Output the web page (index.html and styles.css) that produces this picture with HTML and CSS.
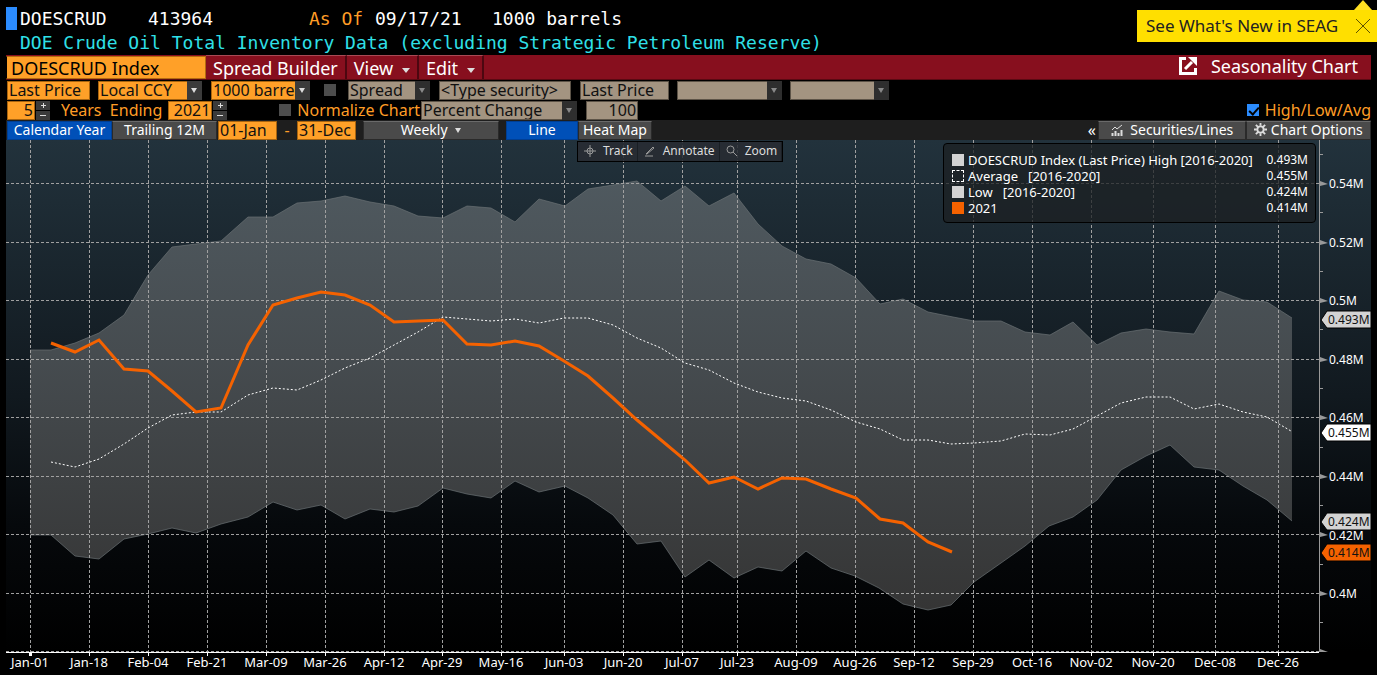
FILE: index.html
```html
<!DOCTYPE html>
<html lang="en">
<head>
  <meta charset="UTF-8">
  <meta name="viewport" content="width=device-width, initial-scale=1">
  <title>DOESCRUD Index | Seasonality Chart</title>
  <link rel="stylesheet" href="styles.css">
</head>
<body>

<header class="quote">
  <div class="quote-line">
    <span class="cursor"></span>
    <span class="ticker">DOESCRUD</span>
    <span class="last">413964</span>
    <span class="asof">As Of</span>
    <span class="date">09/17/21</span>
    <span>1000 barrels</span>
  </div>
  <h1>DOE Crude Oil Total Inventory Data (excluding Strategic Petroleum Reserve)</h1>
  <div class="news">
    <a href="#">See What's New in SEAG</a>
    <button class="close" aria-label="Close">
      <svg width="16" height="16" viewBox="0 0 16 16"><path d="M1 1l14 14M15 1L1 15"/></svg>
    </button>
  </div>
</header>

<nav class="menu">
  <input class="security" type="text" value="DOESCRUD Index" aria-label="Security">
  <button>Spread Builder</button>
  <button>View <i class="tri"></i></button>
  <button>Edit <i class="tri"></i></button>
  <span class="page-name">
    <svg width="18" height="18" viewBox="0 0 18 18"><path d="M7 1.500H1.500v15h15V11" /><path d="M6 12l7-7"/><path class="head" d="M9 0h9v9z"/></svg>
    Seasonality Chart
  </span>
</nav>

<div class="row">
  <input class="field w-price" type="text" value="Last Price" aria-label="Price field">
  <span class="pick w-ccy"><select aria-label="Currency"><option>Local CCY</option></select></span>
  <span class="pick w-unit"><select aria-label="Unit"><option>1000 barrels</option></select></span>
  <input class="tick" type="checkbox" aria-label="Spread on">
  <span class="pick off w-spread"><select aria-label="Spread type"><option>Spread</option></select></span>
  <input class="field off w-type" type="text" value="&lt;Type security&gt;" aria-label="Second security">
  <input class="field off w-price2" type="text" value="Last Price" aria-label="Second price field">
  <span class="pick off w-blank"><select aria-label="Second currency"><option></option></select></span>
  <span class="pick off w-blank2"><select aria-label="Second unit"><option></option></select></span>
</div>

<div class="row">
  <span class="stepper">
    <input class="field w-years" id="years" type="text" value="5">
    <span class="steps"><button class="plus" aria-label="More years"></button><button aria-label="Fewer years"></button></span>
  </span>
  <label class="lbl ending" for="years">Years&nbsp; Ending</label>
  <span class="stepper">
    <input class="field w-end" type="text" value="2021" aria-label="Ending year">
    <span class="steps"><button class="plus" aria-label="Next year"></button><button aria-label="Previous year"></button></span>
  </span>
  <input class="tick normal" id="normalize" type="checkbox">
  <label class="lbl" for="normalize">Normalize Chart</label>
  <span class="pick off w-change"><select aria-label="Normalize by"><option>Percent Change</option></select></span>
  <input class="field off w-base" type="text" value="100" aria-label="Base value">
  <span class="hla">
    <input class="tick" id="hla" type="checkbox" checked>
    <label class="lbl" for="hla">High/Low/Avg</label>
  </span>
</div>

<div class="row tabs">
  <button class="tab on w-tab">Calendar Year</button>
  <button class="tab w-tab">Trailing 12M</button>
  <input class="field w-day" type="text" value="01-Jan" aria-label="From">
  <span class="lbl dash">-</span>
  <input class="field w-day" type="text" value="31-Dec" aria-label="To">
  <button class="tab w-week">Weekly <i class="tri"></i></button>
  <button class="tab on w-line">Line</button>
  <button class="tab w-heat">Heat Map</button>
  <span class="right">
    <button class="more" aria-label="Collapse">«</button>
    <button class="tab w-sec">
      <svg width="12" height="12" viewBox="0 0 12 12"><path class="stroke" d="M1 6l3-3 2 2 5-4"/><path class="bars" d="M1.500 12V9M4.500 12V7M7.500 12V9M10.500 12V6"/></svg>
      Securities/Lines
    </button>
    <button class="tab w-opt">
      <svg width="13" height="13" viewBox="0 0 14 14"><circle class="ring" cx="7" cy="7" r="3.400"/><path class="teeth" d="M7 0v3M7 11v3M0 7h3M11 7h3M2 2l2.200 2.200M9.800 9.800L12 12M12 2L9.800 4.200M4.200 9.800L2 12"/></svg>
      Chart Options
    </button>
  </span>
</div>

<main class="chart">
  <svg class="plot" viewBox="6 140 1365 535" role="img" aria-label="Seasonality chart">
    <defs>
      <linearGradient id="bg" x1="0" y1="0" x2="0" y2="1">
        <stop offset="0" stop-color="#22323c"/>
        <stop offset="0.5" stop-color="#11191f"/>
        <stop offset="0.75" stop-color="#06090c"/>
        <stop offset="1" stop-color="#000"/>
      </linearGradient>
      <linearGradient id="band" gradientUnits="userSpaceOnUse" x1="0" y1="180" x2="0" y2="610">
        <stop offset="0" stop-color="#4f595f"/>
        <stop offset="0.4" stop-color="#464c50"/>
        <stop offset="1" stop-color="#353535"/>
      </linearGradient>
    </defs>
    <rect x="6" y="140" width="1365" height="512" fill="url(#bg)"/>

    <!-- high / low band -->
    <path class="band" d="M30 350 51 350 75 343 99 333 124 315 148 275 172 247 196 244 221 241 248 217 273 217 297 203 321 201 345 196 370 202 394 206 418 216 443 218 467 206 491 208 515 222 539 199 565 206 588 189 613 185 637 181 661 201 685 186 709 206 734 193 758 224 782 246 806 259 831 264 856 278 880 304 903 299 928 312 953 317 974 321 1001 321 1025 332 1050 335 1073 322 1097 345 1121 333 1146 329 1170 332 1194 334 1219 291 1243 300 1267 302 1292 318V521L1267 500 1243 486 1219 470 1194 467 1170 445 1146 456 1121 470 1097 500 1073 517 1049 526 1025 546 1001 563 974 582 951 605 928 610 903 604 879 588 855 576 831 568 806 551 782 571 758 567 734 578 709 560 685 577 661 541 637 544 613 515 588 498 565 486 539 492 515 481 491 498 467 494 443 488 418 506 394 512 370 509 345 519 321 505 297 510 273 502 248 517 221 524 196 533 172 528 148 534 124 539 99 559 75 556 51 535 30 535Z"/>
    <polyline class="edge" points="30,535 51,535 75,556 99,559 124,539 148,534 172,528 196,533 221,524 248,517 273,502 297,510 321,505 345,519 370,509 394,512 418,506 443,488 467,494 491,498 515,481 539,492 565,486 588,498 613,515 637,544 661,541 685,577 709,560 734,578 758,567 782,571 806,551 831,568 855,576 879,588 903,604 928,610 951,605 974,582 1001,563 1025,546 1049,526 1073,517 1097,500 1121,470 1146,456 1170,445 1194,467 1219,470 1243,486 1267,500 1292,521"/>
    <polyline class="edge" points="30,350 51,350 75,343 99,333 124,315 148,275 172,247 196,244 221,241 248,217 273,217 297,203 321,201 345,196 370,202 394,206 418,216 443,218 467,206 491,208 515,222 539,199 565,206 588,189 613,185 637,181 661,201 685,186 709,206 734,193 758,224 782,246 806,259 831,264 856,278 880,304 903,299 928,312 953,317 974,321 1001,321 1025,332 1050,335 1073,322 1097,345 1121,333 1146,329 1170,332 1194,334 1219,291 1243,300 1267,302 1292,318"/>

    <path class="grid" d="M30.500 140V652M89.500 140V652M148.500 140V652M207.500 140V652M266.500 140V652M325.500 140V652M384.500 140V652M442.500 140V652M501.500 140V652M564.500 140V652M623.500 140V652M682.500 140V652M737.500 140V652M796.500 140V652M855.500 140V652M914.500 140V652M973.500 140V652M1032.500 140V652M1091.500 140V652M1153.500 140V652M1215.500 140V652M1278.500 140V652"/>
    <path class="grid" d="M6 183.500H1319M6 242.500H1319M6 300.500H1319M6 359.500H1319M6 417.500H1319M6 476.500H1319M6 534.500H1319M6 593.500H1319M6 651.500H1319"/>

    <polyline class="avg" points="51,462 75,467 99,459 124,444 148,428 172,415 196,412 221,412 248,395 273,388 297,390 321,380 345,368 370,358 394,345 418,332 443,317 467,319 491,321 515,319 539,323 564,318 588,318 613,325 637,338 661,348 685,363 709,370 734,383 758,392 782,398 806,401 831,410 856,422 880,429 903,440 928,440 951,444 974,443 1001,441 1025,434 1050,435 1073,429 1097,416 1121,403 1146,397 1170,397 1194,409 1219,404 1243,412 1267,417 1291,431"/>
    <polyline class="year" points="51,343 75,352 99,340 124,369 148,371 172,391 196,412 221,408 248,345 273,305 297,298 321,292 345,295 370,305 394,322 443,320 467,344 491,345 515,341 539,346 564,361 588,376 613,398 637,420 661,440 685,460 709,483 734,477 758,489 782,478 806,479 831,489 856,498 880,519 903,523 928,542 952,552"/>

    <!-- axes -->
    <path class="x-axis" d="M6 652.500H1319M30.500 652v4M89.500 652v4M148.500 652v4M207.500 652v4M266.500 652v4M325.500 652v4M384.500 652v4M442.500 652v4M501.500 652v4M564.500 652v4M623.500 652v4M682.500 652v4M737.500 652v4M796.500 652v4M855.500 652v4M914.500 652v4M973.500 652v4M1032.500 652v4M1091.500 652v4M1153.500 652v4M1215.500 652v4M1278.500 652v4"/>
    <rect x="29" y="652" width="3" height="4" fill="#fff"/>
    <path class="y-axis" d="M1319.500 140V652M1319 154.500h4M1319 212.500h4M1319 271.500h4M1319 329.500h4M1319 388.500h4M1319 447.500h4M1319 505.500h4M1319 564.500h4M1319 622.500h4"/>
    <path class="arrows" d="M1320 181l8 3-8 2zM1320 240l8 3-8 2zM1320 298l8 3-8 2zM1320 357l8 3-8 2zM1320 415l8 3-8 2zM1320 474l8 3-8 2zM1320 532l8 3-8 2zM1320 591l8 3-8 2zM1320 649l8 3h-8z"/>

    <g class="y-text">
      <text x="1329" y="188">0.54M</text>
      <text x="1329" y="247">0.52M</text>
      <text x="1329" y="305">0.5M</text>
      <text x="1329" y="364">0.48M</text>
      <text x="1329" y="422">0.46M</text>
      <text x="1329" y="481">0.44M</text>
      <text x="1329" y="540">0.42M</text>
      <text x="1329" y="598">0.4M</text>
    </g>
    <g class="flags">
      <path fill="#d3d3d3" d="M1321 320l6-9h44v17h-44z"/>
      <path fill="#fff" d="M1321 433l6-9h44v17h-44z"/>
      <path fill="#d3d3d3" d="M1321 522l6-9h44v17h-44z"/>
      <path fill="#f56200" d="M1321 553l6-9h44v17h-44z"/>
      <text x="1328" y="324">0.493M</text>
      <text x="1328" y="437">0.455M</text>
      <text x="1328" y="526">0.424M</text>
      <text x="1328" y="557">0.414M</text>
    </g>
    <g class="x-text">
      <text x="30" y="667">Jan-01</text>
      <text x="89" y="667">Jan-18</text>
      <text x="148" y="667">Feb-04</text>
      <text x="207" y="667">Feb-21</text>
      <text x="266" y="667">Mar-09</text>
      <text x="325" y="667">Mar-26</text>
      <text x="384" y="667">Apr-12</text>
      <text x="442" y="667">Apr-29</text>
      <text x="501" y="667">May-16</text>
      <text x="564" y="667">Jun-03</text>
      <text x="623" y="667">Jun-20</text>
      <text x="682" y="667">Jul-07</text>
      <text x="737" y="667">Jul-23</text>
      <text x="796" y="667">Aug-09</text>
      <text x="855" y="667">Aug-26</text>
      <text x="914" y="667">Sep-12</text>
      <text x="973" y="667">Sep-29</text>
      <text x="1032" y="667">Oct-16</text>
      <text x="1091" y="667">Nov-02</text>
      <text x="1153" y="667">Nov-20</text>
      <text x="1215" y="667">Dec-08</text>
      <text x="1278" y="667">Dec-26</text>
    </g>
  </svg>

  <div class="tools">
    <button><svg width="12" height="12" viewBox="0 0 12 12"><circle cx="6" cy="6" r="3"/><path d="M6 0v12M0 6h12"/></svg>Track</button>
    <button><svg width="12" height="12" viewBox="0 0 12 12"><path d="M2 9l7-7 1 1-7 6zM1 11h8"/></svg>Annotate</button>
    <button><svg width="12" height="12" viewBox="0 0 12 12"><circle cx="4.500" cy="4.500" r="3.500"/><path d="M7 7l4 4"/></svg>Zoom</button>
  </div>

  <ul class="legend">
    <li><i class="key"></i>DOESCRUD Index (Last Price) High [2016-2020]<b>0.493M</b></li>
    <li><i class="key dots"></i>Average&nbsp;&nbsp; [2016-2020]<b>0.455M</b></li>
    <li><i class="key"></i>Low&nbsp;&nbsp; [2016-2020]<b>0.424M</b></li>
    <li><i class="key orange"></i>2021<b>0.414M</b></li>
  </ul>
</main>

</body>
</html>
```
FILE: styles.css
```css
* {
  box-sizing: border-box;
}
body {
  margin: 0;
  background: #000;
  color: #fff;
  font-family: "Noto Sans", "Open Sans", sans-serif;
  font-size: 16px;
}
button, input, select {
  font: inherit;
  margin: 0;
  border: none;
  border-radius: 0;
}
button {
  color: inherit;
  cursor: pointer;
}

/* quote header */
.quote {
  position: relative;
  height: 55px;
  padding: 7px 6px 0;
  font-family: "DejaVu Sans Mono", monospace;
  font-size: 18px;
  line-height: 24px;
}
.quote-line {
  display: flex;
}
.cursor {
  width: 11px;
  height: 23px;
  margin-right: 3px;
  background: #2b8cff;
}
.ticker { width: 128px; }
.last { width: 161px; }
.asof { width: 66px; color: #ff9d26; }
.date { width: 117px; }
.quote h1 {
  margin: 0 0 0 14px;
  font-size: 18px;
  font-weight: normal;
  color: #2fe0e8;
}
.news {
  position: absolute;
  top: 10px;
  right: 0;
  width: 240px;
  height: 32px;
  padding: 0 6px 0 9px;
  display: flex;
  align-items: center;
  justify-content: space-between;
  background: #ffdf00;
  font-family: "Noto Sans", sans-serif;
  font-size: 17px;
}
.news::before {
  content: "";
  position: absolute;
  top: -10px;
  right: 5px;
  border: 9px solid transparent;
  border-top: none;
  border-bottom: 10px solid #ffdf22;
}
.news a {
  color: #222;
  text-decoration: none;
}
.close {
  display: flex;
  padding: 0;
  background: none;
}
.close path {
  stroke: #5d5200;
  fill: none;
}

/* red menu bar */
.menu {
  display: flex;
  margin: 0 6px;
  height: 25px;
  background: #870f1e;
  border-bottom: 1px solid #5a0912;
  font-size: 18px;
}
.security {
  width: 200px;
  margin-top: 1px;
  padding: 0 4px;
  background: #ffa028;
  border: 1px solid #b36b10;
  border-left-color: #000;
  color: #000;
}
.menu button {
  padding: 0 7px;
  background: #870f1e;
  border-top: 1px solid #a84a55;
  border-right: 2px solid #4c0710;
  line-height: 20px;
}
.tri {
  display: inline-block;
  margin-left: 4px;
  border: 3px solid transparent;
  border-top: 5px solid #ddd;
  border-bottom: none;
  vertical-align: 2px;
}
.menu .tri {
  border-width: 5px 4px 0;
}
.page-name {
  display: flex;
  align-items: center;
  gap: 14px;
  margin-left: auto;
  padding-right: 13px;
  line-height: 22px;
  height: 22px;
}
.page-name path {
  fill: none;
  stroke: #fff;
  stroke-width: 3;
}
.page-name .head {
  fill: #fff;
  stroke: none;
}

/* control rows */
.row {
  display: flex;
  align-items: center;
  height: 20px;
  margin: 0 6px;
  padding-left: 1px;
}
.field {
  height: 19px;
  padding: 0 1px;
  background: #ffa028;
  border: 1px solid #a8640f;
  color: #111;
}
.field.off {
  background: #a39481;
  border-color: #5c5347;
}
.pick {
  position: relative;
  display: flex;
  flex-shrink: 0;
  height: 19px;
}
.pick select {
  appearance: none;
  width: 100%;
  padding: 0 14px 0 1px;
  background: #ffa028;
  border: 1px solid #a8640f;
  color: #111;
  line-height: 17px;
  overflow: hidden;
}
.pick.off select {
  background: #a39481;
  border-color: #5c5347;
}
.pick::before {
  content: "";
  position: absolute;
  top: 0;
  right: 0;
  width: 15px;
  height: 19px;
  background: #3b3b3b;
  pointer-events: none;
}
.pick::after {
  content: "";
  position: absolute;
  top: 7px;
  right: 5px;
  border: 3px solid transparent;
  border-top: 5px solid #ddd;
  border-bottom: none;
  pointer-events: none;
}
.pick.off::before { background: #2e2e2e; }
.pick.off::after { border-top-color: #888; }
.tick {
  appearance: none;
  width: 12px;
  height: 12px;
  background: #4d4d4d;
}
.tick:checked {
  position: relative;
  background: #2b8cff;
}
.tick:checked::after {
  content: "";
  position: absolute;
  left: 4px;
  top: 1px;
  width: 4px;
  height: 8px;
  border: solid #000;
  border-width: 0 2px 2px 0;
  transform: rotate(42deg);
}
.lbl {
  color: #ff9d26;
  line-height: 20px;
}
.w-price { width: 83px; margin-right: 8px; }
.w-ccy { width: 104px; margin-right: 9px; }
.w-unit { width: 99px; margin-right: 14px; }
.w-spread { width: 82px; margin: 0 9px 0 12px; }
.w-type { width: 132px; margin-right: 9px; }
.w-price2 { width: 89px; margin-right: 8px; }
.w-blank { width: 105px; margin-right: 8px; }
.w-blank2 { width: 99px; }
.stepper {
  display: flex;
}
.steps {
  display: flex;
  flex-direction: column;
  gap: 1px;
  width: 14px;
  margin-left: 1px;
}
.steps button {
  position: relative;
  height: 9px;
  padding: 0;
  background: #3b3b3b;
}
.steps button::before, .plus::after {
  content: "";
  position: absolute;
  top: 4px;
  left: 4px;
  width: 6px;
  height: 1px;
  background: #ddd;
}
.steps .plus::before {
  left: 5px;
  width: 5px;
}
.steps .plus::after {
  top: 2px;
  left: 7px;
  width: 1px;
  height: 5px;
}
.w-years { width: 28px; text-align: right; }
.w-end { width: 44px; text-align: right; }
.ending { margin: 0 6px 0 11px; }
.normal { margin: 0 6px 0 52px; }
.w-change { width: 156px; margin: 0 9px 0 1px; }
.w-base { width: 52px; text-align: right; }
.hla {
  display: flex;
  align-items: center;
  gap: 6px;
  margin-left: auto;
}

/* tab row */
.tabs {
  background: #1e1e1e;
}
.tab {
  height: 19px;
  padding: 0;
  background: #4a4a4a;
  border: 1px solid #2a2a2a;
  border-top-color: #6a6a6a;
  font-size: 14px;
  line-height: 16px;
  white-space: nowrap;
}
.tab.on {
  background: #0050b8;
  border-color: #003f94;
}
.tab svg {
  margin-right: 4px;
  vertical-align: -1px;
}
.stroke, .ring, .teeth, .bars {
  fill: none;
  stroke: #ddd;
}
.bars { stroke-width: 2; }
.ring { stroke-width: 2; }
.teeth { stroke-width: 2; }
.w-tab { width: 105px; }
.w-day { width: 59px; }
.tab + .w-day { margin-left: 1px; }
.dash { width: 20px; text-align: center; }
.w-week { width: 136px; margin: 0 7px; }
.w-line { width: 72px; }
.w-heat { width: 74px; }
.right {
  display: flex;
  margin-left: auto;
}
.more {
  padding: 0 2px 0 0;
  background: none;
  line-height: 18px;
}
.w-sec { width: 148px; }
.w-opt { width: 125px; }
.w-opt svg { margin-right: 0; }

/* chart */
.chart {
  position: relative;
  margin: 0 6px;
}
.plot {
  display: block;
  width: 100%;
  height: auto;
}
.band { fill: url(#band); }
.edge {
  fill: none;
  stroke: #6a7074;
  stroke-opacity: 0.7;
}
.grid {
  fill: none;
  stroke: #a0a0a0;
  stroke-dasharray: 3 2;
}
.avg {
  fill: none;
  stroke: #fff;
  stroke-dasharray: 2 2;
}
.year {
  fill: none;
  stroke: #f56200;
  stroke-width: 3;
}
.x-axis {
  fill: none;
  stroke: #fff;
}
.y-axis {
  fill: none;
  stroke: #999;
}
.arrows { fill: #999; }
.y-text, .flags {
  fill: #fff;
  font-size: 12px;
}
.flags text { fill: #111; }
.flags path { stroke: #000; }
.x-text {
  fill: #fff;
  font-size: 13px;
  text-anchor: middle;
}
.tools {
  position: absolute;
  top: 1px;
  left: 571px;
  display: flex;
  border: 1px solid #000;
  background: rgba(40, 44, 50, 0.85);
}
.tools button {
  display: flex;
  align-items: center;
  gap: 7px;
  height: 19px;
  padding: 0 4px 2px 6px;
  background: none;
  border-right: 1px solid #1a1f24;
  color: #ddd;
  font-size: 12px;
}
.tools svg {
  fill: none;
  stroke: #999;
}
.legend {
  position: absolute;
  top: 3px;
  right: 55px;
  width: 373px;
  margin: 0;
  padding: 8px 7px 6px 8px;
  list-style: none;
  background: rgba(28, 32, 35, 0.75);
  border: 1px solid #000;
  border-radius: 4px;
  font-size: 13px;
  line-height: 16px;
}
.legend li {
  display: flex;
  align-items: center;
}
.legend b {
  margin-left: auto;
  font-size: 12px;
  font-weight: normal;
}
.key {
  width: 12px;
  height: 12px;
  margin-right: 4px;
  background: #d3d3d3;
}
.key.dots {
  background: none;
  border: 1px dashed #fff;
}
.key.orange { background: #f56200; }
```
